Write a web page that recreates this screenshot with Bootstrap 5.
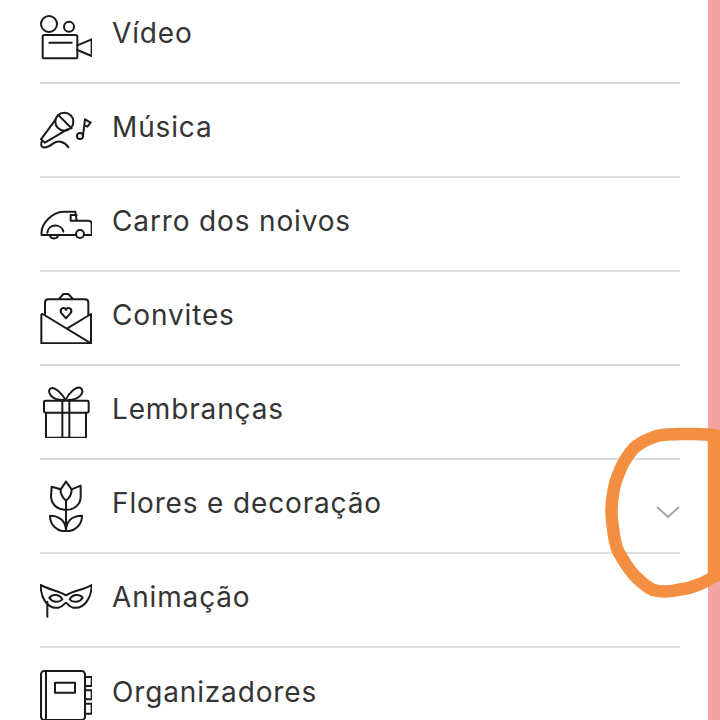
<!DOCTYPE html>
<html lang="pt">

<head>
    <meta charset="utf-8" />
    <meta name="viewport" content="width=device-width, initial-scale=1" />
    <title>Categorias</title>
    <link href="https://cdn.jsdelivr.net/npm/bootstrap@5.3.3/dist/css/bootstrap.min.css" rel="stylesheet" />
    <style>
        html, body {
            height: 720px;
            overflow: hidden;
            background: #fff;
        }

        .tela {
            height: 720px;
        }

        .lista {
            margin-top: -10px;
            padding-left: 40px;
            padding-right: 28px;
        }

        .lista .list-group-item {
            height: 94px;
            padding: 0;
            gap: 20px;
            border-bottom: 2px solid #dedede;
            color: #343434;
            font-family: "Inter", sans-serif;
            font-size: 28px;
            letter-spacing: 0.85px;
        }

        .rotulo {
            margin-bottom: 7px;
        }

        .icone {
            width: 52px;
            height: 52px;
            flex-shrink: 0;
            fill: none;
            stroke: #1a1a1a;
            stroke-width: 6;
            stroke-linecap: round;
            stroke-linejoin: round;
        }

        .seta {
            width: 24px;
            height: 12px;
            margin-top: 12px;
            fill: none;
            stroke: #a0a4a6;
            stroke-width: 2;
        }

        .faixa {
            width: 12px;
            background: #f4a3a3;
        }

        .circulo {
            position: absolute;
            top: 0;
            left: 0;
            width: 720px;
            height: 720px;
            fill: none;
            stroke: #f48f42;
            stroke-width: 12.5;
            pointer-events: none;
        }
    </style>
</head>

<body>
    <div class="tela d-flex position-relative overflow-hidden">
        <div class="flex-grow-1">
            <div class="list-group list-group-flush lista">
                <div class="list-group-item d-flex align-items-center">
                    <svg class="icone" viewBox="30 30 156 156">
                        <circle cx="57" cy="72" r="24" />
                        <circle cx="117" cy="80" r="15" />
                        <rect x="38" y="105" width="104" height="70" rx="5" />
                        <path d="M58 128H125M142 136L185 118V168L142 150" />
                    </svg>
                    <span class="rotulo">Vídeo</span>
                </div>
                <div class="list-group-item d-flex align-items-center">
                    <svg class="icone" viewBox="30 312 156 156">
                        <circle cx="103" cy="365" r="27" />
                        <path d="M85 345L125 385M77 358L33 418L45 428L112 388M35 425C28 450 50 445 70 430C85 420 105 425 115 442" />
                        <circle cx="150" cy="408" r="9" />
                        <path d="M159 408L165 358L182 368L172 380L163 376" />
                    </svg>
                    <span class="rotulo">Música</span>
                </div>
                <div class="list-group-item d-flex align-items-center">
                    <svg class="icone" viewBox="30 54 156 156">
                        <path d="M138 165H35C30 130 70 95 100 95H136L140 122H122V105H140M140 122H175Q185 122 185 132V165H162" />
                        <path d="M52 158C55 130 95 130 100 155M60 167C62 178 82 178 84 167" />
                        <circle cx="150" cy="162" r="12" />
                    </svg>
                    <span class="rotulo">Carro dos noivos</span>
                </div>
                <div class="list-group-item d-flex align-items-center">
                    <svg class="icone" viewBox="30 336 156 156">
                        <path d="M88 356L100 342H115L128 356M45 402V368Q45 358 55 358H165Q175 358 175 368V405" />
                        <path d="M38 402L34 404V490H183V402L112 445M38 402L183 490" />
                        <path d="M108 415L93 398C88 385 105 378 108 390C112 378 128 385 123 398Z" />
                    </svg>
                    <span class="rotulo">Convites</span>
                </div>
                <div class="list-group-item d-flex align-items-center">
                    <svg class="icone" viewBox="30 48 156 156">
                        <rect x="42" y="92" width="134" height="36" rx="4" />
                        <path d="M48 128V203H168V128M97 92V203M118 92V203" />
                        <path d="M107 90C95 70 75 50 62 55C50 62 60 90 100 90M107 90C115 70 140 45 153 55C165 65 150 90 115 90" />
                    </svg>
                    <span class="rotulo">Lembranças</span>
                </div>
                <div class="list-group-item d-flex align-items-center">
                    <svg class="icone" viewBox="30 330 156 156">
                        <path d="M65 350L63 380C65 410 90 420 108 420C130 420 152 405 152 380L152 347L125 358L108 335L92 358Z" />
                        <path d="M92 358C90 375 100 385 108 392C118 385 125 375 125 358M108 392V482" />
                        <path d="M108 484C80 484 60 465 60 437C85 437 108 450 108 484C108 450 130 437 156 437C156 465 135 484 108 484Z" />
                    </svg>
                    <span class="rotulo">Flores e decoração</span>
                    <svg class="seta ms-auto" viewBox="0 0 24 12">
                        <path d="M1 1L12 11L23 1" />
                    </svg>
                </div>
                <div class="list-group-item d-flex align-items-center">
                    <svg class="icone" viewBox="30 42 156 156">
                        <path d="M32 75C60 90 85 92 108 106C130 92 160 90 185 75C185 110 165 148 130 143C115 141 112 128 108 128C104 128 100 141 85 143C50 148 32 110 32 75Z" />
                        <path d="M58 113C68 100 90 103 97 118C86 130 66 127 58 113ZM119 118C126 103 148 100 158 113C150 127 130 130 119 118ZM52 125V170" />
                    </svg>
                    <span class="rotulo">Animação</span>
                </div>
                <div class="list-group-item d-flex align-items-center">
                    <svg class="icone" viewBox="30 324 156 156">
                        <rect x="33" y="330" width="132" height="147" rx="10" />
                        <rect x="75" y="365" width="60" height="30" />
                        <path d="M48 330V477M165 348H185V375H165M165 388H185V415H165M165 428H185V458H165" />
                    </svg>
                    <span class="rotulo">Organizadores</span>
                </div>
            </div>
        </div>
        <div class="faixa"></div>
        <svg class="circulo" viewBox="0 0 720 720">
            <path d="M722 437C708 433 696 434 683 434C672 434 664 434 657 436C647 439 640 443 634 448C628 455 624 461 621 468C617 477 614 485 613 494C611 505 611 517 613 528C614 537 615 544 618 551C623 560 628 568 634 575C640 581 646 587 653 590C661 592 669 592 677 590C686 589 693 587 700 584C708 581 714 577 722 572" />
            <path d="M714 437V574" />
        </svg>
    </div>

    <script src="https://cdn.jsdelivr.net/npm/bootstrap@5.3.3/dist/js/bootstrap.bundle.min.js"></script>
</body>

</html>
